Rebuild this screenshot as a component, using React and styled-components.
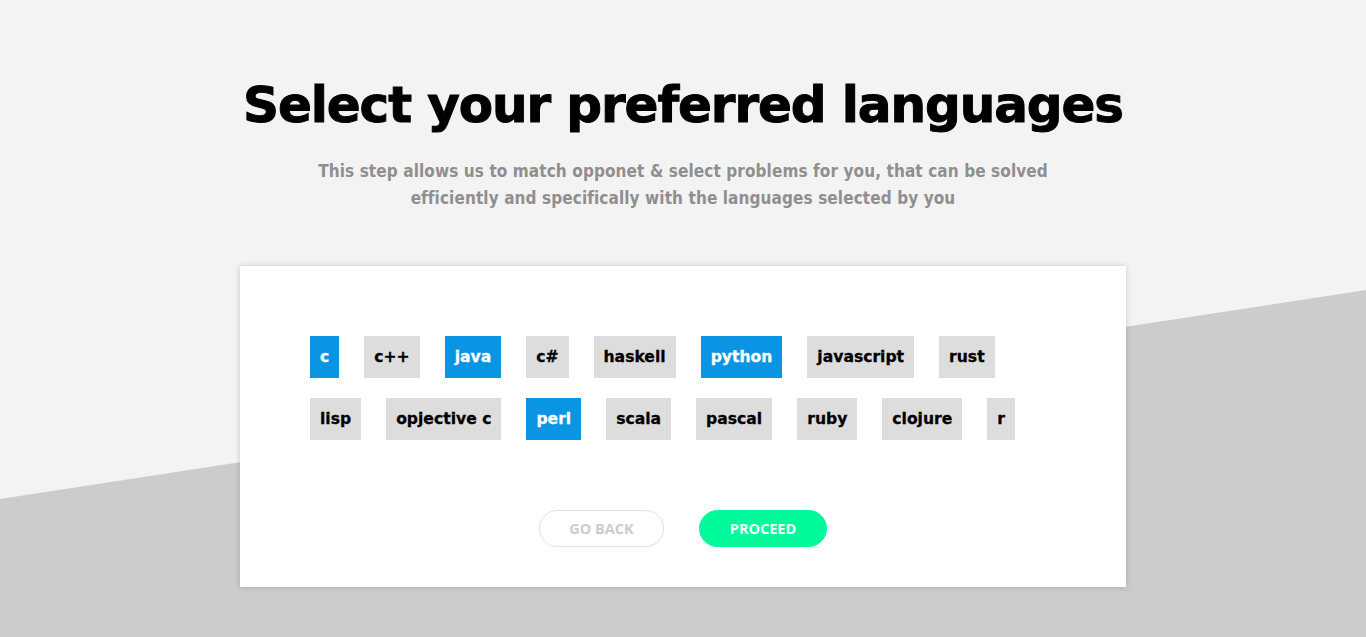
import React, { useState } from "react";
import styled, { createGlobalStyle } from "styled-components";

const Global = createGlobalStyle`
  html, body { margin: 0; padding: 0; }
  body { background: #f3f3f3; font-family: "DejaVu Sans", sans-serif; }
`;

const Page = styled.div`
  position: relative;
  min-height: 637px;
  display: flex;
  flex-direction: column;
  align-items: center;
  padding-top: 72px;
  box-sizing: border-box;
  overflow: hidden;
  &::before {
    content: "";
    position: absolute;
    inset: 0;
    background: #cccccc;
    clip-path: polygon(0 499px, 100% 290px, 100% 100%, 0 100%);
    z-index: 0;
  }
  > * { position: relative; z-index: 1; }
`;

const Title = styled.h1`
  margin: 0;
  font-family: "DejaVu Sans", sans-serif;
  font-weight: 700;
  font-size: 50px;
  line-height: 66px;
  letter-spacing: -1.1px;
  -webkit-text-stroke: 1px #000;
  color: #000;
  text-align: center;
`;

const Subtitle = styled.p`
  margin: 20px 0 0;
  width: 780px;
  font-family: "DejaVu Sans Condensed", "DejaVu Sans", sans-serif;
  font-stretch: condensed;
  font-weight: 700;
  font-size: 17px;
  line-height: 27px;
  letter-spacing: 0.1px;
  color: #8f8f8f;
  text-align: center;
`;

const Card = styled.section`
  margin-top: 54px;
  width: 886px;
  box-sizing: border-box;
  background: #fff;
  box-shadow: 0 0 6px rgba(0, 0, 0, 0.18);
  padding: 70px 70px 40px;
`;

const TagList = styled.div`
  display: flex;
  flex-wrap: wrap;
  gap: 20px 25px;
`;

const Tag = styled.button`
  height: 42px;
  padding: 0 10px;
  border: none;
  cursor: pointer;
  font-family: "DejaVu Sans", sans-serif;
  font-weight: 700;
  font-size: 15.6px;
  -webkit-text-stroke: 0.3px currentColor;
  background: ${(p) => (p.$selected ? "#0994e4" : "#dddddd")};
  color: ${(p) => (p.$selected ? "#fff" : "#000")};
`;

const Actions = styled.div`
  display: flex;
  justify-content: center;
  gap: 35px;
  margin-top: 70px;
`;

const PillButton = styled.button`
  height: 37px;
  width: ${(p) => p.$w}px;
  border-radius: 19px;
  font-family: "Open Sans", sans-serif;
  font-weight: 700;
  font-size: 14.5px;
  text-transform: uppercase;
  cursor: pointer;
  border: 1px solid ${(p) => (p.$primary ? "#00fa9a" : "#f1dcdc")};
  background: ${(p) => (p.$primary ? "#00fa9a" : "#fff")};
  color: ${(p) => (p.$primary ? "#fff" : "#cccccc")};
`;

const LANGS = [
  "c", "c++", "java", "c#", "haskell", "python", "javascript", "rust",
  "lisp", "opjective c", "perl", "scala", "pascal", "ruby", "clojure", "r",
];

export default function App() {
  const [selected, setSelected] = useState(new Set(["c", "java", "python", "perl"]));
  const toggle = (l) =>
    setSelected((s) => {
      const n = new Set(s);
      n.has(l) ? n.delete(l) : n.add(l);
      return n;
    });
  return (
    <>
      <Global />
      <Page>
        <Title>Select your preferred languages</Title>
        <Subtitle>
          This step allows us to match opponet &amp; select problems for you, that can be solved
          efficiently and specifically with the languages selected by you
        </Subtitle>
        <Card>
          <TagList>
            {LANGS.map((l) => (
              <Tag key={l} $selected={selected.has(l)} onClick={() => toggle(l)}>
                {l}
              </Tag>
            ))}
          </TagList>
          <Actions>
            <PillButton $w={125}>Go back</PillButton>
            <PillButton $w={128} $primary>Proceed</PillButton>
          </Actions>
        </Card>
      </Page>
    </>
  );
}
